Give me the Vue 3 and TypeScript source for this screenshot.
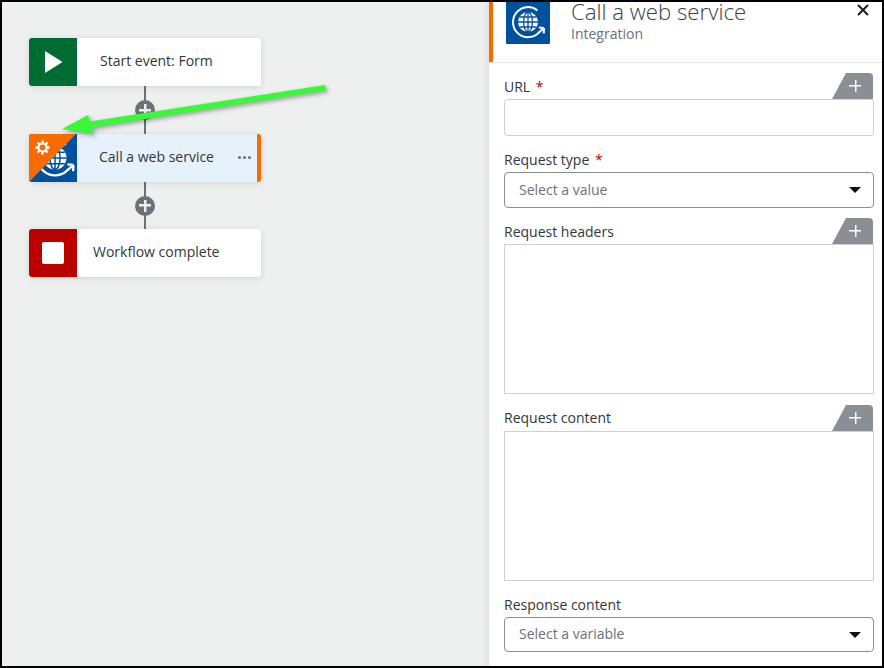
<script setup lang="ts">
const globeRing = "M31.5 10.5A15 15 0 1 0 33.5 31.8"
</script>

<template>
  <div class="frame">
    <section class="canvas">
      <div class="node">
        <div class="icon green">
          <svg width="48" height="48" viewBox="0 0 48 48"><path d="M16 13 33.5 24 16 35Z" fill="#fff" /></svg>
        </div>
        <span class="node-text t1">Start event: Form</span>
      </div>
      <div class="connector"><span class="plus"></span></div>
      <div class="node selected">
        <div class="icon blue">
          <svg width="48" height="48" viewBox="0 0 48 48">
            <g transform="translate(0.700 -1.300) scale(1.150)">
              <circle cx="22" cy="22" r="10" fill="#fff" />
              <g fill="none" stroke="#0050a0" stroke-width="1.300">
                <ellipse cx="22" cy="22" rx="4.400" ry="10" />
                <path d="M22 12V32M12 22H32M13.500 17H30.500M13.500 27H30.500" />
              </g>
              <path :d="globeRing" fill="none" stroke="#fff" stroke-width="2" />
              <path d="M33 32.500 38 28M38 28 37.800 33.500M38 28 32.800 27.500" fill="none" stroke="#fff" stroke-width="2" />
            </g>
            <path d="M0 0H47L0 48Z" fill="#f76b00" />
            <g transform="translate(13.500 13.500)" fill="none" stroke="#fff">
              <circle r="4" stroke-width="2.200" />
              <path d="M0-7V-4.500M0 7V4.500M-7 0H-4.500M7 0H4.500M-5-5-3.200-3.200M5 5 3.200 3.200M-5 5-3.200 3.200M5-5 3.200-3.200" stroke-width="2.400" />
            </g>
          </svg>
        </div>
        <span class="node-text t2">Call a web service</span>
        <span class="dots"><i></i><i></i><i></i></span>
      </div>
      <div class="connector"><span class="plus"></span></div>
      <div class="node">
        <div class="icon red"><span class="stop"></span></div>
        <span class="node-text t3">Workflow complete</span>
      </div>
    </section>

    <aside class="panel">
      <header class="panel-head">
        <svg class="head-icon" width="44" height="44" viewBox="0 0 44 44">
          <rect width="44" height="44" rx="1" fill="#0050a0" />
          <circle cx="22" cy="22" r="10" fill="#fff" />
          <g fill="none" stroke="#0050a0" stroke-width="1.300">
            <ellipse cx="22" cy="22" rx="4.400" ry="10" />
            <path d="M22 12V32M12 22H32M13.500 17H30.500M13.500 27H30.500" />
          </g>
          <path :d="globeRing" fill="none" stroke="#fff" stroke-width="2" />
          <path d="M33 32.500 38 28M38 28 37.800 33.500M38 28 32.800 27.500" fill="none" stroke="#fff" stroke-width="2" />
        </svg>
        <div class="head-text">
          <div class="title">Call a web service</div>
          <div class="subtitle">Integration</div>
        </div>
        <svg class="close" width="12" height="12" viewBox="0 0 12 12">
          <path d="M1 1 11 11M11 1 1 11" stroke="#1c1c1c" stroke-width="2" />
        </svg>
      </header>

      <div class="form">
        <div class="field">
          <div class="label-row">
            <label>URL <b>*</b></label>
            <span class="tab"></span>
          </div>
          <div class="input"></div>
        </div>
        <div class="field">
          <div class="label-row"><label>Request type <b>*</b></label></div>
          <div class="select"><span>Select a value</span><i class="caret"></i></div>
        </div>
        <div class="field">
          <div class="label-row">
            <label>Request headers</label>
            <span class="tab"></span>
          </div>
          <div class="area"></div>
        </div>
        <div class="field">
          <div class="label-row tall">
            <label>Request content</label>
            <span class="tab"></span>
          </div>
          <div class="area"></div>
        </div>
        <div class="field">
          <div class="label-row"><label>Response content</label></div>
          <div class="select short"><span>Select a variable</span><i class="caret"></i></div>
        </div>
      </div>
    </aside>

    <svg class="arrow" width="340" height="60" viewBox="0 0 340 60">
      <path d="M62 49 88 35 90 41.500 325 5 326 10.500 92 47.500 93 54Z" fill="#39f739" />
    </svg>
  </div>
</template>

<style scoped>
.frame {
  position: relative;
  display: flex;
  box-sizing: border-box;
  width: 884px;
  height: 668px;
  overflow: hidden;
  border: 2px solid #000;
  background: #eef0ef;
  font-family: "Open Sans", "Liberation Sans", sans-serif;
  color: #333;
}
.canvas {
  display: flex;
  flex-direction: column;
  align-items: flex-start;
  box-sizing: border-box;
  width: 487px;
  padding: 36px 0 0 27px;
}
.node {
  display: flex;
  align-items: center;
  position: relative;
  box-sizing: border-box;
  width: 232px;
  height: 48px;
  overflow: hidden;
  border-radius: 3px;
  background: #fff;
  box-shadow: 0 1px 7px rgba(0, 0, 0, 0.12);
  font-size: 14px;
}
.node.selected {
  background: #e6f1fb;
  border-right: 4px solid #f76b00;
}
.icon {
  display: flex;
  align-items: center;
  justify-content: center;
  flex: none;
  width: 48px;
  height: 48px;
}
.green { background: #006b32; }
.blue { background: #0050a0; }
.red { background: #bb0000; }
.stop {
  width: 22px;
  height: 22px;
  border-radius: 2px;
  background: #fff;
}
.node-text {
  margin-bottom: 4px;
  white-space: nowrap;
  color: #32363a;
}
.t1 { margin-left: 23px; }
.t2 { margin-left: 22px; }
.t3 { margin-left: 16px; }
.dots {
  display: flex;
  gap: 2px;
  margin-left: auto;
  margin-right: 6px;
  margin-bottom: 1px;
}
.dots i {
  width: 3px;
  height: 3px;
  border-radius: 50%;
  background: #6b7178;
}
.connector {
  display: flex;
  align-items: center;
  justify-content: center;
  width: 232px;
  height: 48px;
  background: linear-gradient(#6b7178, #6b7178) center / 2px 100% no-repeat;
}
.connector:nth-of-type(4) { height: 47px; }
.plus {
  width: 20px;
  height: 20px;
  border-radius: 50%;
  background:
    linear-gradient(#eef0ef, #eef0ef) center / 12px 2.500px no-repeat,
    linear-gradient(#eef0ef, #eef0ef) center / 2.500px 12px no-repeat,
    #6b7178;
}
.panel {
  flex: 1;
  min-width: 0;
  background: #fff;
  box-shadow: -2px 0 6px rgba(0, 0, 0, 0.08);
}
.panel-head {
  display: flex;
  align-items: flex-start;
  position: relative;
  box-sizing: border-box;
  height: 60px;
  padding-left: 13px;
  border-left: 4px solid #f76b00;
  box-shadow: 0 1px 0 #e2e3e4;
}
.head-icon { flex: none; margin-top: -2px; }
.head-text { margin-left: 21px; }
.title {
  font-size: 22.200px;
  font-weight: 300;
  line-height: 20px;
  color: #3a3f44;
}
.subtitle {
  margin-top: 3px;
  font-size: 14px;
  line-height: 18px;
  color: #6b7178;
}
.close {
  position: absolute;
  right: 13px;
  top: 2px;
}
.form {
  padding: 11px 8px 0 15px;
}
.field { margin-bottom: 10px; }
.label-row {
  display: flex;
  align-items: flex-end;
  justify-content: space-between;
  height: 26px;
  padding-right: 1px;
}
.label-row.tall { height: 27px; }
.label-row.tall label { margin-bottom: 1px; }
label {
  font-size: 14px;
  line-height: 24px;
  color: #32363a;
}
label b {
  margin-left: 2px;
  font-weight: 400;
  color: #bb0000;
}
.tab {
  width: 41px;
  height: 26px;
  border-top-right-radius: 4px;
  clip-path: polygon(14px 0, 100% 0, 100% 100%, 0 100%);
  background:
    linear-gradient(#fff, #fff) 17px 12px / 12px 1.500px no-repeat,
    linear-gradient(#fff, #fff) 22.500px 6.500px / 1.500px 12px no-repeat,
    #8a8f95;
}
.input,
.area,
.select {
  box-sizing: border-box;
  width: 370px;
  background: #fff;
  border: 1px solid #cfd1d3;
}
.input {
  height: 37px;
  border-radius: 3px;
}
.area { height: 150px; }
.select {
  display: flex;
  align-items: center;
  justify-content: space-between;
  height: 36px;
  padding: 0 12px 0 14px;
  border-color: #8a8f95;
  border-radius: 4px;
  font-size: 14px;
  color: #6b7178;
}
.select span { margin-bottom: 2px; }
.select.short { height: 35px; }
.caret {
  width: 0;
  height: 0;
  border-left: 6px solid transparent;
  border-right: 6px solid transparent;
  border-top: 6px solid #111;
}
.arrow {
  position: absolute;
  left: -2px;
  top: 78px;
  filter: drop-shadow(2px 2px 2px rgba(0, 0, 0, 0.35));
}
</style>
